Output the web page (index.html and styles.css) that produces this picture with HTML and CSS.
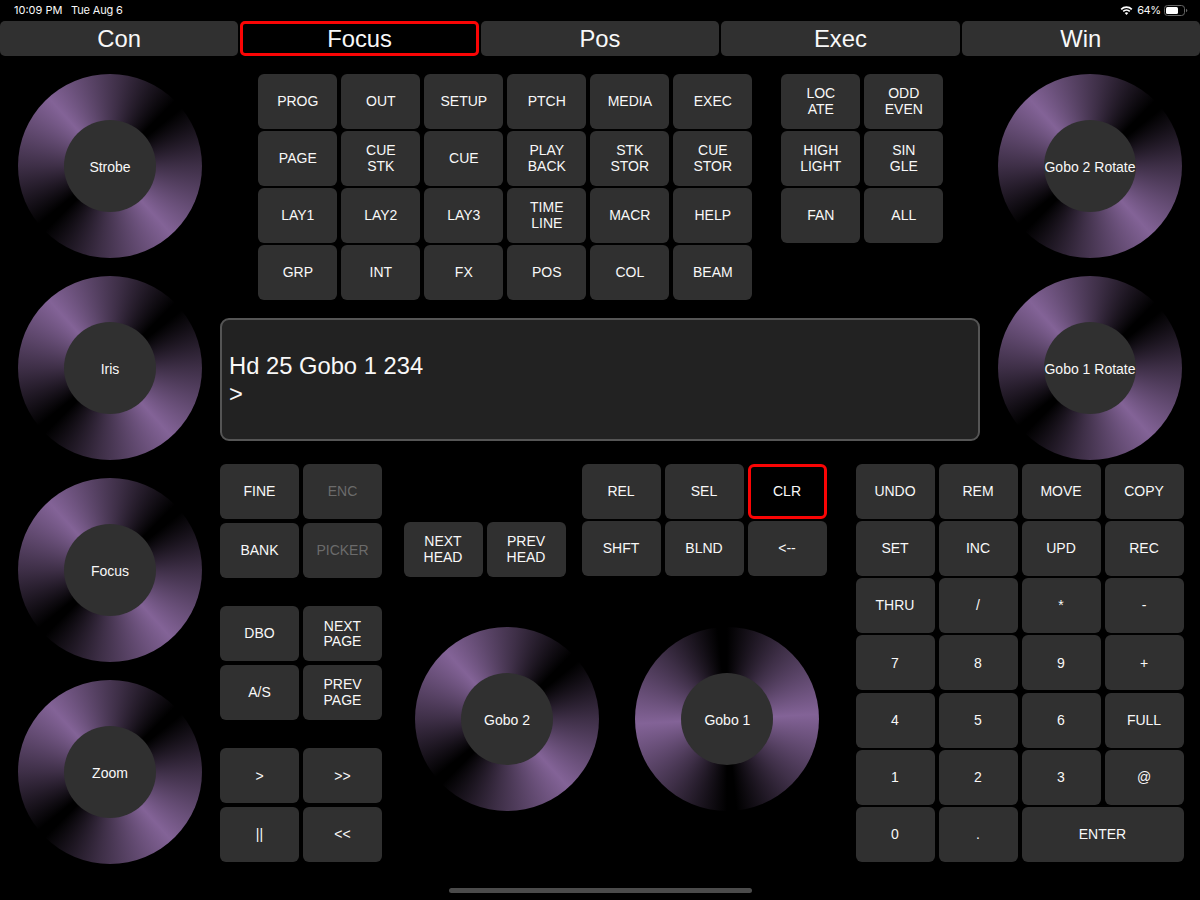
FILE: index.html
```html
<!DOCTYPE html>
<html lang="en">
<head>
<meta charset="utf-8">
<title>Lighting Console</title>
<link rel="stylesheet" href="styles.css">
</head>
<body>
<header class="status">
  <span class="time">10:09 PM</span><span class="date">Tue Aug 6</span>
  <span class="spacer"></span>
  <svg class="wifi" width="13" height="9" viewBox="0 0 12 9" fill="none" stroke="#fff" stroke-width="1.7"><path d="M.7 3.3a7.6 7.6 0 0 1 10.6 0"/><path d="M2.7 5.4a4.8 4.8 0 0 1 6.6 0"/><path d="M6 9 4.2 7.1a2.6 2.6 0 0 1 3.6 0z" fill="#fff" stroke="none"/></svg>
  <span class="percent">64%</span>
  <svg class="battery" width="24" height="11" viewBox="0 0 24 11"><rect x=".5" y=".5" width="20" height="10" rx="3" fill="none" stroke="#666"/><rect x="2" y="2" width="12" height="7" rx="1.5" fill="#fff"/><path d="M22 3.7v3.6q1.3-.5 1.3-1.8T22 3.7z" fill="#666"/></svg>
</header>
<nav class="tabs">
  <button class="tab">Con</button><button class="tab active">Focus</button><button class="tab">Pos</button><button class="tab">Exec</button><button class="tab">Win</button>
</nav>
<main class="console">
  <aside class="dials">
    <div class="dial"><span class="hub">Strobe</span></div>
    <div class="dial"><span class="hub">Iris</span></div>
    <div class="dial"><span class="hub">Focus</span></div>
    <div class="dial"><span class="hub">Zoom</span></div>
  </aside>
  <div class="desk">
    <section class="upper">
      <div class="center">
        <div class="windows">
          <div class="keys six">
            <button>PROG</button><button>OUT</button><button>SETUP</button><button>PTCH</button><button>MEDIA</button><button>EXEC</button>
            <button>PAGE</button><button>CUE<br>STK</button><button>CUE</button><button>PLAY<br>BACK</button><button>STK<br>STOR</button><button>CUE<br>STOR</button>
            <button>LAY1</button><button>LAY2</button><button>LAY3</button><button>TIME<br>LINE</button><button>MACR</button><button>HELP</button>
            <button>GRP</button><button>INT</button><button>FX</button><button>POS</button><button>COL</button><button>BEAM</button>
          </div>
          <div class="keys two">
            <button>LOC<br>ATE</button><button>ODD<br>EVEN</button>
            <button>HIGH<br>LIGHT</button><button>SIN<br>GLE</button>
            <button>FAN</button><button>ALL</button>
          </div>
        </div>
        <div class="command"><div>Hd 25 Gobo 1 234</div><div>&gt;</div></div>
      </div>
      <div class="dials">
        <div class="dial"><span class="hub">Gobo 2 Rotate</span></div>
        <div class="dial"><span class="hub">Gobo 1 Rotate</span></div>
      </div>
    </section>
    <section class="lower">
      <div class="banks">
        <div class="keys two loose"><button>FINE</button><button class="off">ENC</button><button>BANK</button><button class="off">PICKER</button></div>
        <div class="keys two loose"><button>DBO</button><button>NEXT<br>PAGE</button><button>A/S</button><button>PREV<br>PAGE</button></div>
        <div class="keys two loose"><button>&gt;</button><button>&gt;&gt;</button><button>||</button><button>&lt;&lt;</button></div>
      </div>
      <div class="middle">
        <div class="actions">
          <div class="keys two heads"><button>NEXT<br>HEAD</button><button>PREV<br>HEAD</button></div>
          <div class="keys three"><button>REL</button><button>SEL</button><button class="active">CLR</button><button>SHFT</button><button>BLND</button><button>&lt;--</button></div>
        </div>
        <div class="gobos">
          <div class="dial"><span class="hub">Gobo 2</span></div>
          <div class="dial upright"><span class="hub">Gobo 1</span></div>
        </div>
      </div>
      <div class="keys four">
        <button>UNDO</button><button>REM</button><button>MOVE</button><button>COPY</button>
        <button>SET</button><button>INC</button><button>UPD</button><button>REC</button>
        <button>THRU</button><button>/</button><button>*</button><button>-</button>
        <button>7</button><button>8</button><button>9</button><button>+</button>
        <button>4</button><button>5</button><button>6</button><button>FULL</button>
        <button>1</button><button>2</button><button>3</button><button>@</button>
        <button>0</button><button>.</button><button class="wide">ENTER</button>
      </div>
    </section>
  </div>
</main>
<footer class="home"><span class="home-bar"></span></footer>
</body>
</html>
```
FILE: styles.css
```css
* { box-sizing: border-box; }
body {
  margin: 0;
  width: 1200px;
  height: 900px;
  overflow: hidden;
  display: flex;
  flex-direction: column;
  background: #000;
  color: #f8f8f8;
  font-family: "Liberation Sans", Arial, sans-serif;
  font-size: 14px;
}
button {
  margin: 0;
  padding: 1px 0 0;
  border: 0;
  border-radius: 6px;
  background: #303030;
  color: #f8f8f8;
  font: inherit;
  line-height: 15.6px;
}
button.active { background: #000; border: 3px solid #fa0505; }
button.off { color: #6b6b6b; }

.status {
  height: 21px;
  padding: 0 12.5px 0 14px;
  display: flex;
  align-items: center;
  font: 400 11px/21px Inter, sans-serif;
}
.time { width: 57px; }
.date { letter-spacing: -.15px; }
.spacer { flex: 1; }
.wifi { margin-right: 4px; }
.percent { margin-right: 3px; letter-spacing: -.5px; }

.tabs {
  height: 35px;
  display: grid;
  grid-template-columns: repeat(5, 1fr);
  gap: 2px;
}
.tab { padding: 0; border-radius: 5px; font-size: 23.8px; line-height: 28px; }

.console { height: 823px; display: flex; }
.dials {
  width: 220px;
  padding: 18px;
  display: flex;
  flex-direction: column;
  gap: 18px;
}
.dial {
  flex: none;
  width: 184px;
  height: 184px;
  border-radius: 50%;
  display: flex;
  align-items: center;
  justify-content: center;
  background: conic-gradient(from 48deg, #000 0deg, #000 3deg, #3e2f47 42deg, #836397 90deg, #3e2f47 138deg, #000 177deg, #000 183deg, #3e2f47 222deg, #836397 270deg, #3e2f47 318deg, #000 357deg);
}
.dial.upright {
  background: conic-gradient(from -3deg, #000 0deg, #000 3deg, #3e2f47 42deg, #836397 90deg, #3e2f47 138deg, #000 177deg, #000 183deg, #3e2f47 222deg, #836397 270deg, #3e2f47 318deg, #000 357deg);
}
.hub {
  width: 92px;
  height: 92px;
  padding-top: 1px;
  border-radius: 50%;
  display: flex;
  align-items: center;
  justify-content: center;
  background: #303030;
  white-space: nowrap;
}

.desk { width: 980px; display: flex; flex-direction: column; }
.upper { height: 408px; display: flex; }
.center { width: 760px; padding-top: 18px; }
.windows { height: 244px; padding-left: 38.3px; display: flex; gap: 29px; align-items: flex-start; }
.keys { display: grid; grid-auto-rows: 55px; column-gap: 4px; row-gap: 2px; }
.six { grid-template-columns: repeat(6, 79px); }
.two { grid-template-columns: repeat(2, 79px); }
.three { grid-template-columns: repeat(3, 79px); }
.four { grid-template-columns: repeat(4, 79px); row-gap: 2.15px; }
.wide { grid-column: span 2; }
.loose { row-gap: 3.7px; }
.command {
  height: 123px;
  padding: 0 7px;
  border: 2px solid #555;
  border-radius: 9px;
  background: #222;
  display: flex;
  flex-direction: column;
  justify-content: center;
  font-size: 23.75px;
  line-height: 27.3px;
}

.lower { display: flex; }
.banks { width: 162px; display: flex; flex-direction: column; gap: 28.5px; }
.middle { width: 423.5px; margin: 0 28.5px 0 21.5px; }
.actions { height: 113px; display: flex; align-items: flex-start; gap: 16px; }
.heads { padding-top: 58px; }
.gobos { padding: 50px 0 0 11.5px; display: flex; gap: 36.4px; }

.home { flex: 1; display: flex; justify-content: center; align-items: flex-start; padding-top: 9px; }
.home-bar { width: 303px; height: 5px; border-radius: 3px; background: #4b4b4b; }
```
